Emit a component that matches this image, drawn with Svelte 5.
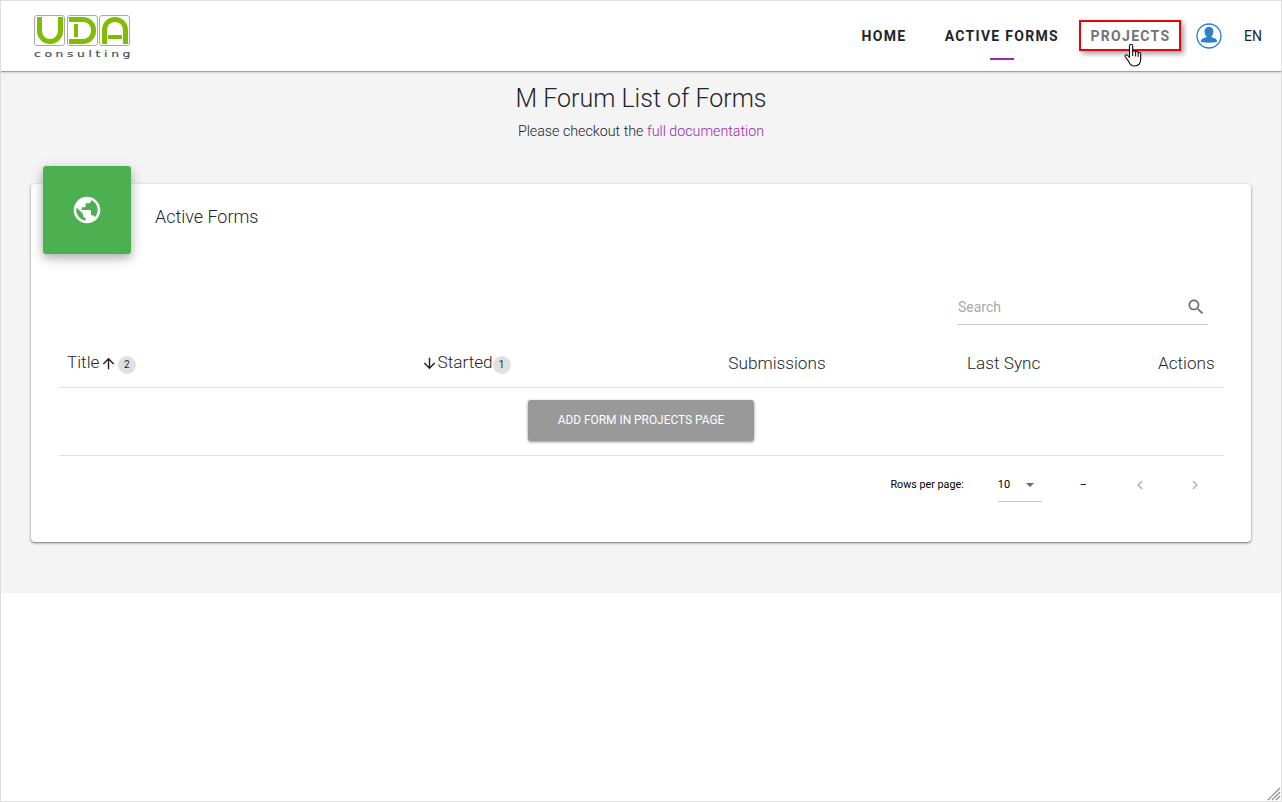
<script>
  const headers = ['Submissions', 'Last Sync', 'Actions'];
</script>

<div class="page">
  <header>
    <div class="logo" aria-label="UDA consulting">
      <div class="tiles">
        <span class="tile"><i class="u"></i></span>
        <span class="tile"><i class="d"></i><i class="d-stem"></i></span>
        <span class="tile"><i class="a"></i><i class="a-bar"></i></span>
      </div>
      <svg class="tagline" width="100" height="14" viewBox="0 0 100 14">
        <text transform="scale(1.45 1)" x="0" y="9" textLength="66.500">consulting</text>
      </svg>
    </div>
    <nav>
      <span class="link home">Home</span>
      <span class="link active">Active Forms</span>
      <span class="link projects">Projects
        <svg class="cursor" width="18" height="24" viewBox="0 0 18 24">
          <path d="M5.5 14.5V3c0-2.4 3.2-2.4 3.2 0v5.6c.4-1.2 2.7-1 2.9.4.7-1 2.5-.6 2.6.7.8-.8 2.5-.3 2.5 1.2v5.2c0 4-2 6.9-6.300 6.900-3.500 0-5-2.500-6.200-5.300L1.300 14c-.9-2 1.300-3 2.500-1.500z" fill="#fff" stroke="#111" stroke-width="1.15" stroke-linejoin="round" />
          <path d="M8.700 8.500v4.500M11.600 9v4.500M14.200 10v3.800" fill="none" stroke="#111" stroke-width="1.100" />
        </svg>
      </span>
      <svg class="avatar" width="26" height="26" viewBox="0 0 26 26">
        <circle cx="13" cy="13" r="12" fill="#fff" stroke="#2f80cb" stroke-width="1.300" />
        <path d="M13 4c3.200 0 4.600 2.100 4.400 4.900-.2 2-.8 3.300-1.800 4.400v1c2.800 1 5.400 1.300 5.400 4v.8q-8 1.300-16 0v-.8c0-2.700 2.600-3 5.400-4v-1c-1-1.100-1.600-2.400-1.800-4.400C8.400 6.100 9.800 4 13 4z" fill="#2f80cb" />
      </svg>
      <span class="lang">EN</span>
    </nav>
  </header>

  <main>
    <h1>M Forum List of Forms</h1>
    <p class="intro">Please checkout the <a href="#docs">full documentation</a></p>

    <section class="card">
      <div class="card-head">
        <div class="badge-icon">
          <svg width="32" height="32" viewBox="0 0 24 24" fill="#fff">
            <path d="M12 2C6.480 2 2 6.480 2 12s4.480 10 10 10 10-4.480 10-10S17.520 2 12 2zm-1 17.930c-3.950-.49-7-3.850-7-7.930 0-.62.08-1.210.21-1.790L9 15v1c0 1.100.9 2 2 2v1.930zm6.900-2.540c-.26-.81-1-1.390-1.900-1.390h-1v-3c0-.55-.45-1-1-1H8v-2h2c.55 0 1-.45 1-1V7h2c1.100 0 2-.9 2-2v-.41c2.930 1.190 5 4.060 5 7.410 0 2.080-.8 3.970-2.100 5.390z" />
          </svg>
        </div>
        <h2>Active Forms</h2>
      </div>

      <div class="toolbar">
        <div class="search">
          <span>Search</span>
          <svg width="20" height="20" viewBox="0 0 24 24" fill="#6d6d6d">
            <path d="M15.500 14h-.79l-.28-.27C15.410 12.590 16 11.110 16 9.500 16 5.910 13.090 3 9.500 3S3 5.910 3 9.500 5.910 16 9.500 16c1.610 0 3.090-.59 4.230-1.570l.27.28v.79l5 4.990L20.490 19l-4.990-5zm-6 0C7.010 14 5 11.990 5 9.500S7.010 5 9.500 5 14 7.010 14 9.500 11.990 14 9.500 14z" />
          </svg>
        </div>
      </div>

      <div class="thead">
        <div class="th title">
          <span>Title</span>
          <svg width="17" height="17" viewBox="0 0 24 24"><path d="M4 12l1.410 1.410L11 7.830V20h2V7.830l5.580 5.590L20 12l-8-8-8 8z" /></svg>
          <b>2</b>
        </div>
        <div class="th started">
          <svg width="17" height="17" viewBox="0 0 24 24"><path d="M20 12l-1.410-1.410L13 16.170V4h-2v12.170l-5.580-5.590L4 12l8 8 8-8z" /></svg>
          <span>Started</span>
          <b>1</b>
        </div>
        {#each headers as h}
          <div class="th plain">{h}</div>
        {/each}
      </div>

      <div class="empty"><button>Add form in projects page</button></div>

      <div class="pager">
        <span class="rows">Rows per page:</span>
        <div class="select"><span>10</span><i></i></div>
        <span class="range">–</span>
        <svg class="prev" width="18" height="18" viewBox="0 0 24 24"><path d="M15.410 7.410L14 6l-6 6 6 6 1.410-1.410L10.830 12z" /></svg>
        <svg width="18" height="18" viewBox="0 0 24 24"><path d="M10 6L8.590 7.410 13.170 12l-4.580 4.590L10 18l6-6z" /></svg>
      </div>
    </section>
  </main>

  <svg class="grip" width="14" height="14" viewBox="0 0 14 14">
    <path d="M1 13L13 1M5 13L13 5M9 13L13 9" stroke="#8c8c8c" stroke-width="1.200" />
  </svg>
</div>

<style>
  * { box-sizing: border-box; }
  .page {
    position: relative;
    width: 1282px;
    height: 802px;
    border: 1px solid #dedede;
    background: #fff;
    font-family: Roboto, sans-serif;
    color: #212529;
    overflow: hidden;
  }
  header {
    position: relative;
    display: flex;
    justify-content: space-between;
    height: 70px;
    padding-left: 33px;
    background: #fff;
    box-shadow: 0 1px 1px #a0a0a0, 0 2px 2px #ddd;
  }
  .logo { padding-top: 14px; }
  .tiles { display: flex; gap: 2px; }
  .tile {
    position: relative;
    width: 31px;
    height: 31px;
    border: 1px solid #aaa;
    border-radius: 3px;
  }
  .tile + .tile { margin-left: -.5px; }
  .tile i { position: absolute; border: 0 solid #80bc00; }
  .u { left: 2px; top: 1px; width: 26px; height: 27px; border-width: 0 5px 5px 5px !important; border-radius: 0 0 13px 13px; }
  .d { left: 1px; top: 1px; width: 27px; height: 27px; border-width: 5px 5px 5px 0 !important; border-radius: 0 13px 13px 0; }
  .d-stem { left: 6px; top: 8px; width: 4px; height: 13px; background: #80bc00; }
  .a { left: 2px; top: 1px; width: 26px; height: 27px; border-width: 5px 5px 0 5px !important; border-radius: 13px 13px 0 0; }
  .a-bar { left: 8px; top: 19px; width: 14px; height: 4px; background: #80bc00; }
  .tagline { display: block; margin-top: 2px; }
  .tagline text { font: 400 8.500px "DejaVu Sans", sans-serif; fill: #50525c; stroke: #50525c; stroke-width: .2px; }

  nav { display: flex; align-items: flex-start; }
  .link, .lang { font-size: 14px; line-height: 20px; }
  .link { font-weight: 700; letter-spacing: 1.300px; text-transform: uppercase; white-space: nowrap; }
  .home { margin: 25px 38.300px 0 0; }
  .active { position: relative; margin: 25px 20px 0 0; }
  .active::after {
    content: "";
    position: absolute;
    left: 45px;
    top: 32px;
    width: 24px;
    height: 2px;
    background: #9c27b0;
  }
  .projects {
    position: relative;
    width: 102px;
    height: 31px;
    margin: 19px 15px 0 0;
    padding: 4px 0 0 9.500px;
    border: 2px solid #f00008;
    box-shadow: 3px 3px 5px rgba(0, 0, 0, .35);
    color: #737377;
  }
  .cursor { position: absolute; left: 43px; top: 21px; }
  .avatar { margin: 22px 22px 0 0; }
  .lang { width: 37px; margin-top: 25px; }

  main { height: 522px; padding: 11px 30px 0; background: #f4f4f4; }
  h1 { margin: 0; font-size: 25px; line-height: 33px; font-weight: 300; text-align: center; }
  .intro { margin: 6px 0 0; font-size: 14.250px; line-height: 20px; font-weight: 300; text-align: center; }
  a { color: #9c27b0; text-decoration: none; }
  .card {
    height: 358px;
    margin-top: 43px;
    padding: 0 28px;
    border-radius: 4px;
    background: #fff;
    box-shadow: 0 1px 2px rgba(0, 0, 0, .45), 0 1px 4px rgba(0, 0, 0, .14);
  }
  .card-head { display: flex; height: 97px; margin-left: -16px; }
  .badge-icon {
    display: flex;
    align-items: center;
    justify-content: center;
    width: 88px;
    height: 88px;
    margin-top: -18px;
    border-radius: 3px;
    background: #4caf50;
    box-shadow: 0 4px 14px rgba(0, 0, 0, .22), 0 4px 7px rgba(0, 0, 0, .14);
  }
  h2 { margin: 21px 0 0 24px; font-size: 17.950px; line-height: 24px; font-weight: 300; }
  .toolbar { display: flex; justify-content: flex-end; height: 58px; padding-right: 15px; }
  .search {
    display: flex;
    align-items: center;
    justify-content: space-between;
    width: 250px;
    height: 44px;
    padding: 9px 2px 0 0;
    border-bottom: 1px solid #c9c9c9;
    font-size: 14px;
    color: #a9a9a9;
  }
  .thead {
    display: grid;
    grid-template-columns: 353.500px 307.800px 238.700px 191px 1fr;
    height: 49px;
    padding: 0 8px;
    border-bottom: 1px solid #e0e0e0;
    font-size: 17.200px;
    line-height: 24px;
    font-weight: 300;
  }
  .th { display: flex; padding-top: 11px; white-space: nowrap; }
  .plain { padding-top: 12px; }
  .th svg { margin-top: 5px; fill: #222; }
  .title svg { margin-left: .5px; }
  .th b {
    width: 18px;
    height: 18px;
    margin: 6px 0 0;
    border-radius: 9px;
    background: #e0e0e0;
    font-size: 10px;
    line-height: 18px;
    font-weight: 400;
    text-align: center;
  }
  .title b { margin-left: 1px; }
  .empty { height: 68px; padding-top: 12px; border-bottom: 1px solid #e0e0e0; text-align: center; }
  button {
    width: 226px;
    height: 41px;
    padding: 0 0 2px;
    border: 0;
    border-radius: 3px;
    background: #999;
    box-shadow: 0 1px 3px rgba(0, 0, 0, .45);
    color: #fff;
    font: 400 11.900px/20px Roboto, sans-serif;
    text-transform: uppercase;
  }
  .pager { display: flex; align-items: flex-start; padding: 19px 19.500px 0 0; justify-content: flex-end; font-size: 11px; line-height: 20px; color: #000; }
  .rows { font-size: 10.750px; }
  .select { display: flex; width: 44px; height: 27px; margin-left: 34px; border-bottom: 1px solid #c9c9c9; }
  .select i { width: 0; height: 0; margin: 8px 0 0 16px; border: 4px solid transparent; border-top-color: #666b78; border-bottom: 0; }
  .range { margin-left: 38px; }
  .pager svg { margin-top: 1px; fill: #b4b4b4; }
  .pager .prev { margin: 1px 37px 0 43.500px; }
  .grip { position: absolute; right: 0; bottom: 0; }
</style>
